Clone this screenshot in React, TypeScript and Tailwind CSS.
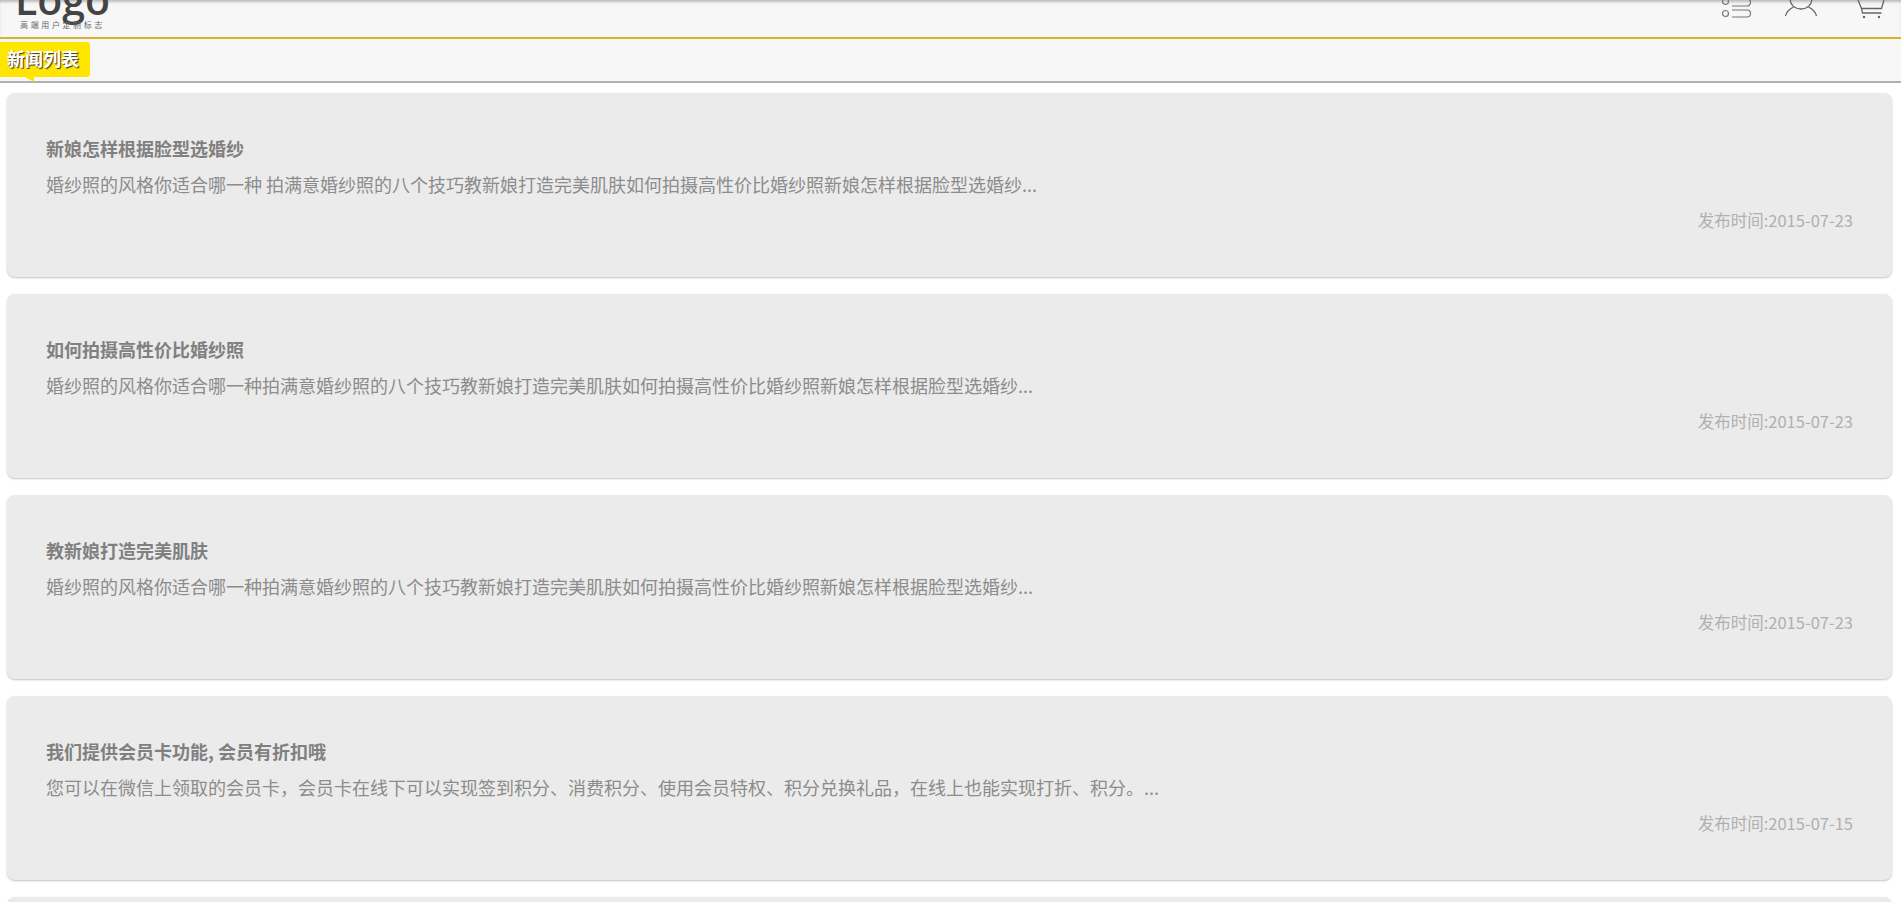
const news = [
  {
    title: "新娘怎样根据脸型选婚纱",
    text: "婚纱照的风格你适合哪一种 拍满意婚纱照的八个技巧教新娘打造完美肌肤如何拍摄高性价比婚纱照新娘怎样根据脸型选婚纱...",
    date: "2015-07-23",
  },
  {
    title: "如何拍摄高性价比婚纱照",
    text: "婚纱照的风格你适合哪一种拍满意婚纱照的八个技巧教新娘打造完美肌肤如何拍摄高性价比婚纱照新娘怎样根据脸型选婚纱...",
    date: "2015-07-23",
  },
  {
    title: "教新娘打造完美肌肤",
    text: "婚纱照的风格你适合哪一种拍满意婚纱照的八个技巧教新娘打造完美肌肤如何拍摄高性价比婚纱照新娘怎样根据脸型选婚纱...",
    date: "2015-07-23",
  },
  {
    title: "我们提供会员卡功能, 会员有折扣哦",
    text: "您可以在微信上领取的会员卡，会员卡在线下可以实现签到积分、消费积分、使用会员特权、积分兑换礼品，在线上也能实现打折、积分。...",
    date: "2015-07-15",
  },
  { title: "", text: "", date: "" },
];

const ListIcon = () => (
  <svg width="30" height="20" viewBox="0 0 30 20" fill="none" stroke="#777" strokeWidth="1.2">
    <circle cx="3.5" cy="1.5" r="3" />
    <circle cx="3.5" cy="13.5" r="3" />
    <path d="M10 -1h15a3.5 3.5 0 0 1 0 7H10" />
    <path d="M10 10h15a3.5 3.5 0 0 1 0 7H10" />
  </svg>
);

const UserIcon = () => (
  <svg width="34" height="20" viewBox="0 0 34 20" fill="none" stroke="#666" strokeWidth="1.3">
    <path d="M6 -2c0 7 5 11 11 11s11-4 11-11" />
    <path d="M1.5 16c1-4 4-7 8-9" />
    <path d="M32.5 16c-1-4-4-7-8-9" />
  </svg>
);

const CartIcon = () => (
  <svg width="30" height="22" viewBox="0 0 30 22" fill="none" stroke="#666" strokeWidth="1.3">
    <path d="M1 0l3.5 8.5h20l2.5-8.5" />
    <path d="M4.5 8.5l1 4.5h19" />
    <circle cx="7" cy="17" r="1.2" fill="#666" stroke="none" />
    <circle cx="22" cy="17" r="1.2" fill="#666" stroke="none" />
  </svg>
);

const App = () => {
  return (
    <div className="h-[902px] overflow-hidden bg-white font-['Noto_Sans_CJK_SC','Noto_Sans',sans-serif]">
      <header className="h-[39px] overflow-hidden border-b-2 border-[#d9b32c] bg-[#f7f7f7] shadow-[inset_0_3px_3px_-1px_#bbb]">
        <div className="flex justify-between">
          <div className="ml-[17px] -mt-[20px] flex w-[91px] flex-col items-center">
            <span className="font-['Open_Sans',sans-serif] text-[41px] font-semibold leading-[38px] text-[#444]">Logo</span>
            <span className="mt-[2px] whitespace-nowrap text-[8px] leading-[10px] tracking-[2.6px] text-[#666]">高端用户定制标志</span>
          </div>
          <div className="flex items-start">
            <div className="mr-[32px]"><ListIcon /></div>
            <div className="mr-[39px]"><UserIcon /></div>
            <div className="mr-[14px]"><CartIcon /></div>
          </div>
        </div>
      </header>

      <div className="h-[44px] border-b-2 border-[#b0b0b0] bg-[#f7f7f7] pt-[3px]">
        <div className="relative h-[35px] w-[90px] rounded-r-[3px] bg-[#ffe600] pl-[7px] text-[18px] font-bold leading-[33px] text-white [text-shadow:1px_1px_1px_#333]">
          新闻列表
          <span className="absolute bottom-[-5px] left-[25px] border-t-[5px] border-l-[9px] border-t-[#ffe600] border-l-transparent" />
        </div>
      </div>

      <main className="flex flex-col gap-[17px] pl-[7px] pr-[9px] pt-[10px]">
        {news.map((item, i) => (
          <article
            key={i}
            className="flex h-[184px] shrink-0 flex-col rounded-[8px] bg-[#ebebeb] pl-[39px] pr-[39px] pt-[42px] shadow-[0_1px_2px_#c4c4c4]"
          >
            {item.title && (
              <>
                <h3 className="text-[18px] font-bold leading-[26px] text-[#808080]">{item.title}</h3>
                <p className="mt-[10px] text-[18px] leading-[26px] text-[#8c8c8c]">{item.text}</p>
                <p className="mt-[11px] text-right text-[16.5px] leading-[24px] text-[#b0b0b0]">
                  发布时间:{item.date}
                </p>
              </>
            )}
          </article>
        ))}
      </main>
    </div>
  );
};

export default App;
